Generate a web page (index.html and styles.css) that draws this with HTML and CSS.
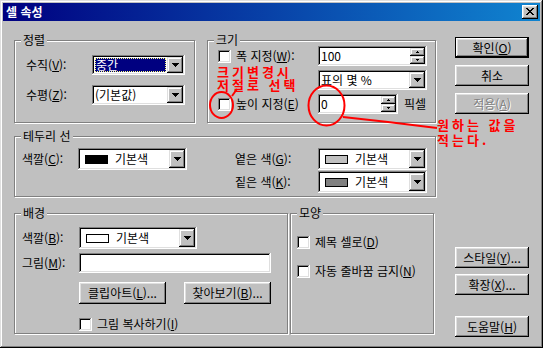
FILE: index.html
```html
<!DOCTYPE html>
<html lang="ko">
<head>
<meta charset="utf-8">
<title>셀 속성</title>
<link rel="stylesheet" href="styles.css">
</head>
<body>
<div class="window">
  <div class="titlebar">
    <span class="title">셀 속성</span>
    <span class="close"><svg width="8" height="7" viewBox="0 0 8 7"><path d="M0 0h2v1h-2zM6 0h2v1h-2zM1 1h2v1h-2zM5 1h2v1h-2zM2 2h4v1h-4zM3 3h2v1h-2zM2 4h4v1h-4zM1 5h2v1h-2zM5 5h2v1h-2zM0 6h2v1h-2zM6 6h2v1h-2z" fill="#000"/></svg></span>
  </div>
  <div class="client">
    <div class="main">
      <div class="row row1">
        <div class="group g-align">
          <span class="legend">정렬</span>
          <div class="align-grid">
            <span class="lbl">수직(<u>V</u>):</span>
            <div class="combo"><span class="field sel">중간</span><span class="drop"><svg width="7" height="4" viewBox="0 0 7 4"><path d="M0 0h7v1h-7zM1 1h5v1h-5zM2 2h3v1h-3zM3 3h1v1h-1z"/></svg></span></div>
            <span class="lbl">수평(<u>Z</u>):</span>
            <div class="combo"><span class="field">(기본값)</span><span class="drop"><svg width="7" height="4" viewBox="0 0 7 4"><path d="M0 0h7v1h-7zM1 1h5v1h-5zM2 2h3v1h-3zM3 3h1v1h-1z"/></svg></span></div>
          </div>
        </div>
        <div class="group g-size">
          <span class="legend">크기</span>
          <div class="size-grid">
            <div class="chk"><span class="check"></span><span>폭 지정(<u>W</u>):</span></div>
            <div class="spin"><span class="field">100</span><span class="spin-btns"><span><svg width="3" height="2" viewBox="0 0 3 2"><path d="M1 0h1v1h-1zM0 1h3v1h-3z"/></svg></span><span><svg width="3" height="2" viewBox="0 0 3 2"><path d="M0 0h3v1h-3zM1 1h1v1h-1z"/></svg></span></span></div>
            <div></div>
            <div class="combo"><span class="field">표의 몇 %</span><span class="drop"><svg width="7" height="4" viewBox="0 0 7 4"><path d="M0 0h7v1h-7zM1 1h5v1h-5zM2 2h3v1h-3zM3 3h1v1h-1z"/></svg></span></div>
            <div class="chk"><span class="check"></span><span>높이 지정(<u>E</u>)</span></div>
            <div class="pix">
              <div class="spin short"><span class="field">0</span><span class="spin-btns"><span><svg width="3" height="2" viewBox="0 0 3 2"><path d="M1 0h1v1h-1zM0 1h3v1h-3z"/></svg></span><span><svg width="3" height="2" viewBox="0 0 3 2"><path d="M0 0h3v1h-3zM1 1h1v1h-1z"/></svg></span></span></div>
              <span class="unit">픽셀</span>
            </div>
          </div>
        </div>
      </div>

      <div class="row row2">
        <div class="group g-border">
          <span class="legend">테두리 선</span>
          <div class="border-grid">
            <span class="lbl">색깔(<u>C</u>):</span>
            <div class="combo color"><span class="field"><span class="swatch black"></span>기본색</span><span class="drop"><svg width="7" height="4" viewBox="0 0 7 4"><path d="M0 0h7v1h-7zM1 1h5v1h-5zM2 2h3v1h-3zM3 3h1v1h-1z"/></svg></span></div>
            <span></span>
            <span class="lbl">옅은 색(<u>G</u>):</span>
            <div class="combo color"><span class="field"><span class="swatch light"></span>기본색</span><span class="drop"><svg width="7" height="4" viewBox="0 0 7 4"><path d="M0 0h7v1h-7zM1 1h5v1h-5zM2 2h3v1h-3zM3 3h1v1h-1z"/></svg></span></div>
            <span></span><span></span><span></span>
            <span class="lbl">짙은 색(<u>K</u>):</span>
            <div class="combo color"><span class="field"><span class="swatch dark"></span>기본색</span><span class="drop"><svg width="7" height="4" viewBox="0 0 7 4"><path d="M0 0h7v1h-7zM1 1h5v1h-5zM2 2h3v1h-3zM3 3h1v1h-1z"/></svg></span></div>
          </div>
        </div>
      </div>

      <div class="row row3">
        <div class="group g-bg">
          <span class="legend">배경</span>
          <div class="bg-row r1">
            <span class="lbl">색깔(<u>B</u>):</span>
            <div class="combo color bgc"><span class="field"><span class="swatch white"></span>기본색</span><span class="drop"><svg width="7" height="4" viewBox="0 0 7 4"><path d="M0 0h7v1h-7zM1 1h5v1h-5zM2 2h3v1h-3zM3 3h1v1h-1z"/></svg></span></div>
          </div>
          <div class="bg-row r2">
            <span class="lbl">그림(<u>M</u>):</span>
            <div class="input"></div>
          </div>
          <div class="bg-row r3">
            <span class="lbl"></span>
            <div class="pair">
              <span class="btn wide">클립아트(<u>L</u>)...</span>
              <span class="btn wide">찾아보기(<u>B</u>)...</span>
            </div>
          </div>
          <div class="bg-row r4">
            <span class="lbl"></span>
            <div class="chk"><span class="check"></span><span>그림 복사하기(<u>I</u>)</span></div>
          </div>
        </div>
        <div class="group g-shape">
          <span class="legend">모양</span>
          <div class="chk"><span class="check"></span><span>제목 셀로(<u>D</u>)</span></div>
          <div class="chk"><span class="check"></span><span>자동 줄바꿈 금지(<u>N</u>)</span></div>
        </div>
      </div>
    </div>

    <div class="buttons">
      <span class="btn default">확인(<u>O</u>)</span>
      <span class="btn b-cancel">취소</span>
      <span class="btn disabled b-apply">적용(<u>A</u>)</span>
      <span class="btn b-style">스타일(<u>Y</u>)...</span>
      <span class="btn b-ext">확장(<u>X</u>)...</span>
      <span class="btn b-help">도움말(<u>H</u>)</span>
    </div>
  </div>

  <svg class="marks" width="543" height="348" viewBox="0 0 543 348">
    <ellipse cx="221.5" cy="105" rx="11.5" ry="13" fill="none" stroke="#ff0000" stroke-width="2"/>
    <path d="M232 96 L237 89" stroke="#ff0000" stroke-width="2" fill="none"/>
    <ellipse cx="326.5" cy="105.5" rx="18" ry="20" fill="none" stroke="#ff0000" stroke-width="2"/>
    <path d="M343 117 L388 122 L437 128" stroke="#ff0000" stroke-width="2" fill="none"/>
  </svg>
  <div class="note note1">크기변경시<br>저절로 선택</div>
  <div class="note note2">원하는 값을<br>적는다.</div>
</div>
</body>
</html>
```

FILE: styles.css
```css
* { box-sizing: border-box; }
html, body { margin: 0; padding: 0; }
body {
  width: 543px;
  height: 348px;
  background: #c0c0c0;
  font-family: "Noto Sans CJK KR", "Noto Sans", sans-serif;
  font-size: 12px;
  line-height: 14px;
  color: #000;
  overflow: hidden;
}
u { text-decoration: underline; text-underline-offset: 1px; }
svg { display: block; }

.window {
  position: relative;
  width: 543px;
  height: 348px;
  padding: 3px;
  background: #c0c0c0;
  box-shadow: inset -1px -1px #000, inset 1px 1px #dfdfdf, inset -2px -2px #808080, inset 2px 2px #fff;
}

.titlebar {
  height: 18px;
  display: flex;
  align-items: center;
  justify-content: space-between;
  padding: 0 2px 0 3px;
  background: linear-gradient(90deg, #000080, #1084d0);
}
.title { color: #fff; font-weight: bold; font-size: 12px; line-height: 18px; }
.close {
  width: 16px;
  height: 14px;
  padding: 3px 0 0 4px;
  background: #c0c0c0;
  box-shadow: inset -1px -1px #000, inset 1px 1px #fff, inset -2px -2px #808080, inset 2px 2px #dfdfdf;
}

.client {
  display: grid;
  grid-template-columns: 423px 74px;
  column-gap: 18px;
  padding: 16px 11px 0 11px;
}
.main { padding-top: 3px; }
.row { display: flex; }
.row1 { gap: 12px; }
.row2 { margin-top: 13px; }
.row3 { margin-top: 16px; gap: 2px; }

.group {
  position: relative;
  border: 1px solid #808080;
  box-shadow: inset 1px 1px #fff, 1px 1px #fff;
}
.legend {
  position: absolute;
  top: -8px;
  left: 6px;
  padding: 0 2px;
  background: #c0c0c0;
  line-height: 14px;
}
.lbl { white-space: nowrap; display: flex; align-items: center; }

/* 정렬 */
.g-align { width: 181px; height: 83px; padding: 14px 0 0 11px; }
.align-grid {
  display: grid;
  grid-template-columns: 66px 93px;
  grid-auto-rows: 20px;
  row-gap: 10px;
}

/* 크기 */
.g-size { width: 229px; height: 83px; padding: 5px 0 0 10px; }
.size-grid {
  display: grid;
  grid-template-columns: 100px 109px;
  grid-auto-rows: 20px;
  row-gap: 4px;
}
.pix { display: flex; align-items: center; }
.unit { margin-left: 6px; }

/* 테두리 선 */
.g-border { width: 422px; height: 61px; padding: 11px 0 0 7px; }
.border-grid {
  display: grid;
  grid-template-columns: 56px 109px 48px 83px 109px;
  grid-auto-rows: 22px;
  row-gap: 1px;
}

/* 배경 */
.g-bg { width: 274px; height: 121px; padding: 13px 0 0 7px; }
.bg-row { display: grid; grid-template-columns: 57px 192px; }
.r1 { height: 21px; }
.r1 .combo { width: 118px; }
.r2 { height: 20px; margin-top: 5px; }
.r3 { height: 22px; margin-top: 9px; }
.r4 { height: 13px; margin-top: 13px; }
.pair { display: flex; justify-content: space-between; }
.btn.wide { width: 87px; height: 22px; }

/* 모양 */
.g-shape { width: 144px; height: 121px; padding: 21px 0 0 6px; display: flex; flex-direction: column; gap: 15px; }

/* controls */
.combo {
  display: flex;
  height: 20px;
  padding: 2px;
  background: #fff;
  box-shadow: inset -1px -1px #fff, inset 1px 1px #808080, inset -2px -2px #dfdfdf, inset 2px 2px #000;
}
.combo.color { height: 22px; }
.combo .field, .spin .field {
  flex: 1;
  display: flex;
  align-items: center;
  padding-left: 1px;
  white-space: nowrap;
  overflow: hidden;
}
.combo .field.sel {
  margin: 1px;
  overflow: visible;
  line-height: 12px;
  background: #000080;
  color: #fff;
  outline: 1px dotted #ffff80;
  outline-offset: -1px;
}
.drop {
  width: 16px;
  flex: none;
  display: flex;
  align-items: center;
  justify-content: center;
  background: #c0c0c0;
  box-shadow: inset -1px -1px #000, inset 1px 1px #dfdfdf, inset -2px -2px #808080, inset 2px 2px #fff;
}
.swatch {
  width: 23px;
  height: 9px;
  margin: 0 7px 0 4px;
  border: 1px solid #000;
  flex: none;
}
.swatch.black { background: #000; }
.swatch.light { background: #c0c0c0; }
.swatch.dark { background: #808080; }
.swatch.white { background: #fff; }

.spin {
  display: flex;
  height: 20px;
  padding: 2px;
  background: #fff;
  box-shadow: inset -1px -1px #fff, inset 1px 1px #808080, inset -2px -2px #dfdfdf, inset 2px 2px #000;
}
.spin.short { width: 80px; }
.spin-btns { width: 15px; display: flex; flex-direction: column; flex: none; }
.spin-btns span {
  flex: 1;
  display: flex;
  align-items: center;
  justify-content: center;
  background: #c0c0c0;
  box-shadow: inset -1px -1px #000, inset 1px 1px #dfdfdf, inset -2px -2px #808080, inset 2px 2px #fff;
}

.input {
  height: 20px;
  background: #fff;
  box-shadow: inset -1px -1px #fff, inset 1px 1px #808080, inset -2px -2px #dfdfdf, inset 2px 2px #000;
}

.chk { display: flex; align-items: center; gap: 5px; white-space: nowrap; }
.check {
  width: 13px;
  height: 13px;
  flex: none;
  background: #fff;
  box-shadow: inset -1px -1px #fff, inset 1px 1px #808080, inset -2px -2px #dfdfdf, inset 2px 2px #000;
}

.btn {
  height: 21px;
  display: flex;
  align-items: center;
  justify-content: center;
  white-space: nowrap;
  background: #c0c0c0;
  box-shadow: inset -1px -1px #000, inset 1px 1px #fff, inset -2px -2px #808080, inset 2px 2px #dfdfdf;
}
.btn.default { border: 1px solid #000; }
.btn.disabled { color: #808080; text-shadow: 1px 1px 0 #fff; }

.buttons { display: flex; flex-direction: column; }
.b-cancel { margin-top: 7px; }
.b-apply { margin-top: 7px; }
.b-style { margin-top: 133px; }
.b-ext { margin-top: 6px; }
.b-help { margin-top: 21px; }

/* red annotations drawn over the dialog */
.marks { position: absolute; left: 0; top: 0; pointer-events: none; }
.note {
  position: absolute;
  color: #ff0000;
  font-weight: bold;
  font-size: 13px;
  letter-spacing: 3px;
  line-height: 13px;
  white-space: nowrap;
}
.note1 { left: 217px; top: 65px; }
.note2 { left: 437px; top: 117px; line-height: 15px; }
```
